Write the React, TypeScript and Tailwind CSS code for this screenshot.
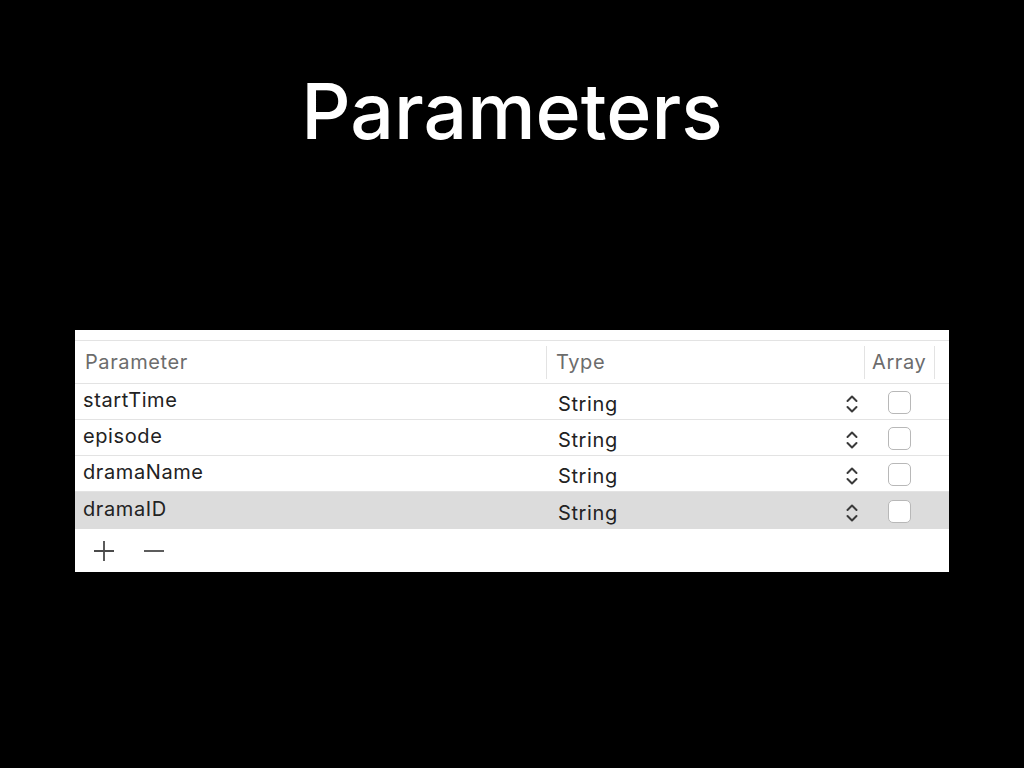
const rows = [
  { name: "startTime", selected: false },
  { name: "episode", selected: false },
  { name: "dramaName", selected: false },
  { name: "dramaID", selected: true },
];

function Chevrons() {
  return (
    <svg width="14" height="22" viewBox="0 0 14 22" fill="none" stroke="#3a3a3a" strokeWidth="2" strokeLinecap="round" strokeLinejoin="round">
      <path d="M2.5 8 L7 3.5 L11.5 8" />
      <path d="M2.5 14 L7 18.5 L11.5 14" />
    </svg>
  );
}

export default function App() {
  return (
    <div className="min-h-screen w-full bg-black" style={{ fontFamily: "Inter, 'Liberation Sans', sans-serif" }}>
      <div className="flex h-[330px] flex-col items-center pt-[67px]">
        <h1 className="text-[77px] leading-[88px] font-medium tracking-[0px] text-white">
          Parameters
        </h1>
      </div>
      <div className="ml-[75px] w-[874px] bg-white pt-[10px]">
        <div className="border-t border-[#e3e3e3]" />
        <div className="flex h-[43px] items-center border-b border-[#e3e3e3] text-[20px] tracking-[0.6px] text-[#6c6c6c]">
          <div className="w-[471px] pl-[10px]">Parameter</div>
          <div className="flex h-[33px] w-[318px] items-center border-l border-[#e3e3e3] pl-[9px]">Type</div>
          <div className="flex h-[33px] w-[71px] items-center border-l border-r border-[#e3e3e3] pl-[7px]">Array</div>
        </div>
        {rows.map((r) => (
          <div
            key={r.name}
            className={`flex h-[36px] items-center text-[20px] tracking-[0.6px] text-[#222] ${r.selected ? "bg-[#dcdcdc] h-[37px]" : "border-b border-[#e3e3e3]"}`}
          >
            <div className="w-[471px] pl-[8px] pb-[4px]">{r.name}</div>
            <div className="flex w-[318px] items-center pl-[12px] pt-[4px]">
              <span className="flex-1">String</span>
              <span className="mr-[5px] flex items-center">
                <Chevrons />
              </span>
            </div>
            <div className="flex w-[71px] items-center pl-[24px] pt-[2px]">
              <div className="h-[23px] w-[23px] rounded-[5px] border border-[#b8b8b8] bg-white" />
            </div>
          </div>
        ))}
        <div className="flex h-[43px] items-center gap-[28px] pl-[18px]">
          <svg width="22" height="22" viewBox="0 0 22 22" stroke="#4a4a4a" strokeWidth="1.8">
            <path d="M11 1 V21 M1 11 H21" />
          </svg>
          <svg width="22" height="22" viewBox="0 0 22 22" stroke="#4a4a4a" strokeWidth="1.8">
            <path d="M1 11 H21" />
          </svg>
        </div>
      </div>
    </div>
  );
}
